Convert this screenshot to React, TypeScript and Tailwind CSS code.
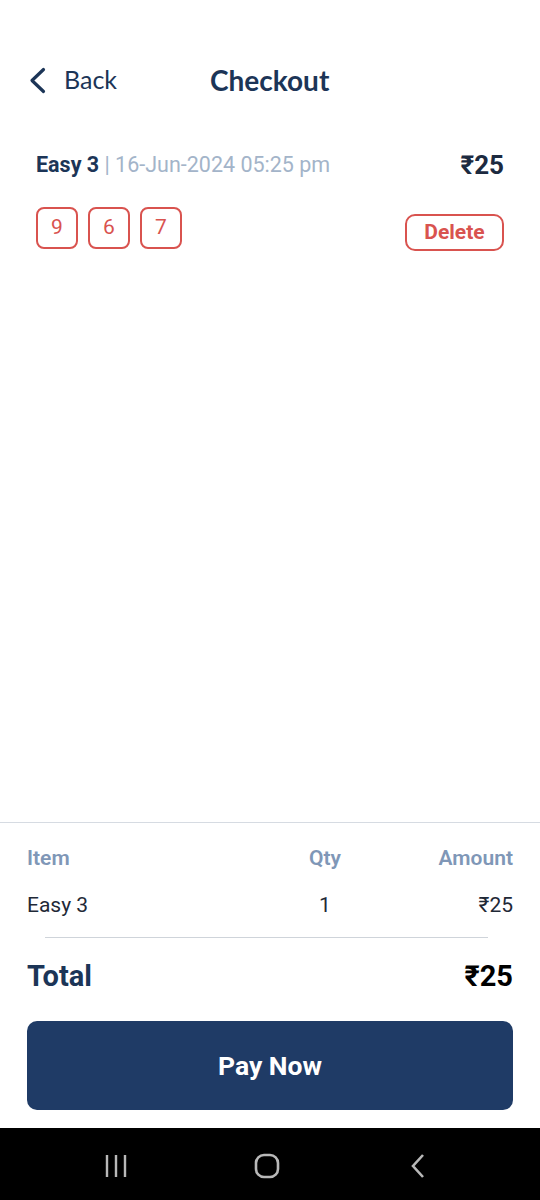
const picks = ['9', '6', '7'];

export default function App() {
  return (
    <div className="flex h-[1200px] w-[540px] flex-col bg-white font-['Roboto',sans-serif]">
      <header className="flex h-[146px] flex-col pt-[59px]">
        <div className="flex items-center px-[29px]">
          <svg width="17" height="27" viewBox="0 0 17 27" fill="none" stroke="#1c3557" strokeWidth="3.2" strokeLinecap="round" strokeLinejoin="round">
            <path d="M14.5 2.5L3 13.5l11.5 11" />
          </svg>
          <span className="ml-[18px] font-['Lato',sans-serif] text-[25px] text-[#1c3557]">Back</span>
          <h1 className="ml-[93px] font-['Lato',sans-serif] text-[28px] font-bold text-[#1c3557]">
            Checkout
          </h1>
        </div>
      </header>

      <main className="flex-1 px-[36px]">
        <div className="flex items-center justify-between">
          <p className="text-[21.5px]">
            <span className="font-bold text-[#1c3557]">Easy 3</span>
            <span className="text-[#a3b4c9]"> | 16-Jun-2024 05:25 pm</span>
          </p>
          <span className="text-[26px] font-bold text-[#1c2a40]">₹25</span>
        </div>

        <div className="mt-[22px] flex items-start justify-between">
          <div className="flex gap-[10px]">
            {picks.map((n, i) => (
              <div
                key={i}
                className="flex h-[42px] w-[42px] items-center justify-center rounded-[8px] border-2 border-[#d9534f] text-[21px] text-[#d9534f]"
              >
                {n}
              </div>
            ))}
          </div>
          <button className="mt-[7px] flex h-[37px] w-[99px] items-center justify-center rounded-[10px] border-2 border-[#d9534f] text-[21px] font-bold text-[#d9534f]">
            Delete
          </button>
        </div>
      </main>

      <section className="border-t border-[#d6dbe2] px-[27px] pt-[20px] pb-[18px]">
        <div className="flex text-[21px] font-semibold text-[#7f97b7]">
          <span className="flex-1">Item</span>
          <span className="w-[76px] text-center">Qty</span>
          <span className="w-[150px] text-right">Amount</span>
        </div>
        <div className="mt-[16px] flex text-[21px] text-[#1f2937]">
          <span className="flex-1">Easy 3</span>
          <span className="w-[76px] text-center">1</span>
          <span className="w-[150px] text-right">₹25</span>
        </div>
        <div className="mr-[25px] ml-[18px] mt-[15px] border-t border-[#cfd4da]" />
        <div className="mt-[17px] flex items-center justify-between">
          <span className="text-[29px] font-bold text-[#1c3557]">Total</span>
          <span className="text-[29px] font-bold text-black">₹25</span>
        </div>
        <button className="mt-[23px] flex h-[89px] w-full items-center justify-center rounded-[10px] bg-[#1f3b66] text-[26.5px] font-bold text-white">
          Pay Now
        </button>
      </section>

      <nav className="flex h-[72px] items-center justify-center bg-black pt-[3px] pr-[6px] text-[#b8b8b8]">
        <div className="flex w-[151px] justify-center">
          <svg width="24" height="24" viewBox="0 0 24 24" fill="none" stroke="currentColor" strokeWidth="2.4">
            <path d="M3 1v22M12 1v22M21 1v22" />
          </svg>
        </div>
        <div className="flex w-[151px] justify-center">
          <svg width="26" height="26" viewBox="0 0 26 26" fill="none" stroke="currentColor" strokeWidth="2.6">
            <rect x="2" y="2" width="22" height="22" rx="8" />
          </svg>
        </div>
        <div className="flex w-[151px] justify-center">
          <svg width="16" height="26" viewBox="0 0 16 26" fill="none" stroke="currentColor" strokeWidth="2.6">
            <path d="M13 2L3 13l10 11" />
          </svg>
        </div>
      </nav>
    </div>
  );
}
